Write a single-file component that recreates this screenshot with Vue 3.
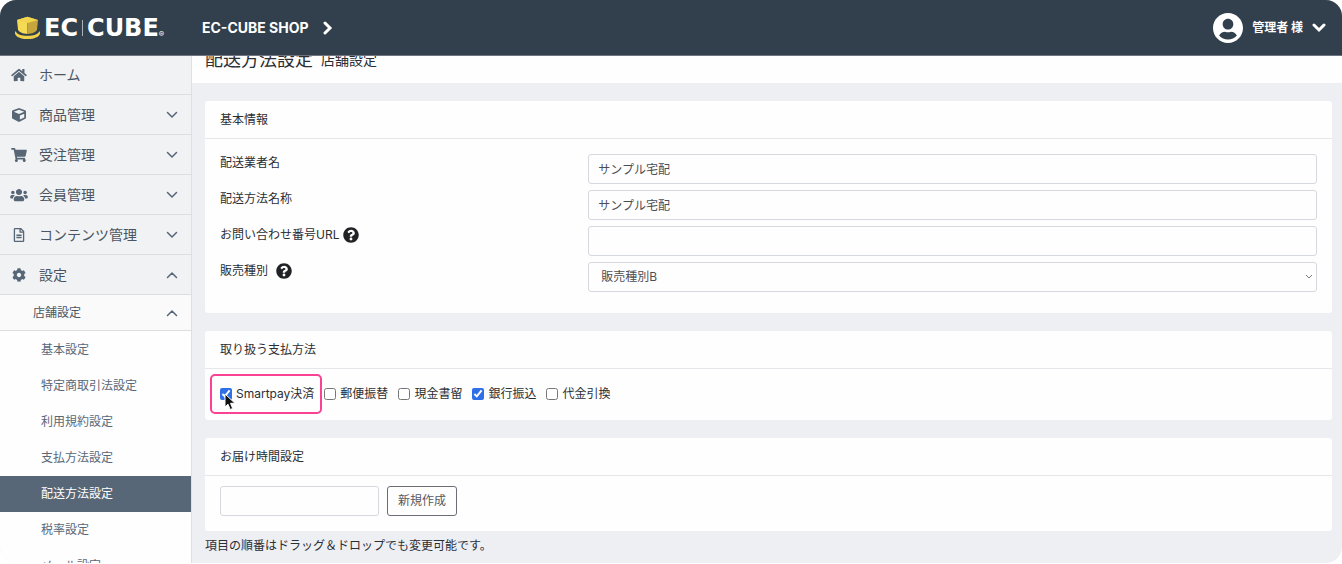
<script setup>
import { ref } from 'vue'

const icons = {
  home: { box: '0 0 576 512', d: 'M280.37 148.26L96 300.11V464a16 16 0 0 0 16 16l112.06-.29a16 16 0 0 0 15.92-16V368a16 16 0 0 1 16-16h64a16 16 0 0 1 16 16v95.64a16 16 0 0 0 16 16.05L464 480a16 16 0 0 0 16-16V300L295.67 148.26a12.19 12.19 0 0 0-15.3 0zM571.6 251.47L488 182.56V44.05a12 12 0 0 0-12-12h-56a12 12 0 0 0-12 12v72.61L318.47 43a48 48 0 0 0-61 0L4.34 251.47a12 12 0 0 0-1.6 16.9l25.5 31A12 12 0 0 0 45.15 301l235.22-193.74a12.19 12.19 0 0 1 15.3 0L530.9 301a12 12 0 0 0 16.9-1.6l25.5-31a12 12 0 0 0-1.7-16.93z' },
  cube: { box: '0 0 512 512', d: 'M239.1 6.3l-208 78c-18.7 7-31.1 25-31.1 45v225.1c0 18.2 10.3 34.8 26.5 42.9l208 104c13.5 6.8 29.4 6.8 42.9 0l208-104c16.3-8.1 26.5-24.8 26.5-42.9V129.3c0-20-12.4-37.9-31.1-44.9l-208-78C262 2.2 250 2.2 239.1 6.3zM256 68.4l192 72v1.1l-192 78-192-78v-1.1l192-72zm32 356V275.5l160-65v133.9l-160 80z' },
  cart: { box: '0 0 576 512', d: 'M528.12 301.319l47.273-208C578.806 78.301 567.391 64 551.99 64H159.208l-9.166-44.81C147.758 8.021 137.93 0 126.529 0H24C10.745 0 0 10.745 0 24v16c0 13.255 10.745 24 24 24h69.883l70.248 343.435C147.325 417.1 136 435.222 136 456c0 30.928 25.072 56 56 56s56-25.072 56-56c0-15.674-6.447-29.835-16.824-40h209.647C430.447 426.165 424 440.326 424 456c0 30.928 25.072 56 56 56s56-25.072 56-56c0-22.172-12.888-41.332-31.579-50.405l5.517-24.276c3.413-15.018-8.002-29.319-23.403-29.319H218.117l-6.545-32h293.145c11.206 0 20.92-7.754 23.403-18.681z' },
  users: { box: '0 0 640 512', d: 'M96 224c35.3 0 64-28.7 64-64s-28.7-64-64-64-64 28.7-64 64 28.7 64 64 64zm448 0c35.3 0 64-28.7 64-64s-28.7-64-64-64-64 28.7-64 64 28.7 64 64 64zm32 32h-64c-17.6 0-33.5 7.1-45.1 18.6 40.3 22.1 68.9 62 75.1 109.4h66c17.7 0 32-14.3 32-32v-32c0-35.3-28.7-64-64-64zm-256 0c61.9 0 112-50.1 112-112S381.9 32 320 32 208 82.1 208 144s50.1 112 112 112zm76.8 32h-8.3c-20.8 10-43.9 16-68.5 16s-47.6-6-68.5-16h-8.3C179.6 288 128 339.6 128 403.2V432c0 26.5 21.5 48 48 48h288c26.5 0 48-21.5 48-48v-28.8c0-63.6-51.6-115.2-115.2-115.2zm-223.7-13.4C161.5 263.1 145.6 256 128 256H64c-35.3 0-64 28.7-64 64v32c0 17.7 14.3 32 32 32h65.9c6.3-47.4 34.9-87.3 75.2-109.4z' },
  file: { box: '0 0 384 512', d: 'M288 248v28c0 6.6-5.4 12-12 12H108c-6.6 0-12-5.4-12-12v-28c0-6.6 5.4-12 12-12h168c6.6 0 12 5.4 12 12zm-12 72H108c-6.6 0-12 5.4-12 12v28c0 6.6 5.4 12 12 12h168c6.6 0 12-5.4 12-12v-28c0-6.6-5.4-12-12-12zm108-188.1V464c0 26.5-21.5 48-48 48H48c-26.5 0-48-21.5-48-48V48C0 21.5 21.5 0 48 0h204.1C264.8 0 277 5.1 286 14.1L369.9 98c9 8.9 14.1 21.2 14.1 33.9zm-128-80V128h76.1L256 51.9zM336 464V176H232c-13.3 0-24-10.7-24-24V48H48v416h288z' },
  cog: { box: '0 0 512 512', d: 'M487.4 315.7l-42.6-24.6c4.3-23.2 4.3-47 0-70.2l42.6-24.6c4.9-2.8 7.1-8.6 5.5-14-11.1-35.6-30-67.8-54.7-94.6-3.8-4.1-10-5.1-14.8-2.3L380.8 110c-17.9-15.4-38.5-27.3-60.8-35.1V25.8c0-5.6-3.9-10.5-9.4-11.7-36.7-8.2-74.3-7.8-109.2 0-5.5 1.2-9.4 6.1-9.4 11.7V75c-22.2 7.9-42.8 19.8-60.8 35.1L88.7 85.5c-4.9-2.8-11-1.9-14.8 2.3-24.7 26.7-43.6 58.9-54.7 94.6-1.7 5.4.6 11.2 5.5 14L67.3 221c-4.3 23.2-4.3 47 0 70.2l-42.6 24.6c-4.9 2.8-7.1 8.6-5.5 14 11.1 35.6 30 67.8 54.7 94.6 3.8 4.1 10 5.1 14.8 2.3l42.6-24.6c17.9 15.4 38.5 27.3 60.8 35.1v49.2c0 5.6 3.9 10.5 9.4 11.7 36.7 8.2 74.3 7.8 109.2 0 5.5-1.2 9.4-6.1 9.4-11.7v-49.2c22.2-7.9 42.8-19.8 60.8-35.1l42.6 24.6c4.9 2.8 11 1.9 14.8-2.3 24.7-26.7 43.6-58.9 54.7-94.6 1.5-5.5-.7-11.3-5.6-14.1zM256 336c-44.1 0-80-35.9-80-80s35.9-80 80-80 80 35.9 80 80-35.9 80-80 80z' },
}
const helpPath = 'M504 256c0 136.997-111.043 248-248 248S8 392.997 8 256C8 119.083 119.043 8 256 8s248 111.083 248 248zM262.655 90c-54.497 0-89.255 22.957-116.549 63.758-3.536 5.286-2.353 12.415 2.715 16.258l34.699 26.31c5.205 3.947 12.621 3.008 16.665-2.122 17.864-22.658 30.113-35.797 57.303-35.797 20.429 0 45.698 13.148 45.698 32.958 0 14.976-12.363 22.667-32.534 33.976C247.128 238.528 216 254.941 216 296v4c0 6.627 5.373 12 12 12h56c6.627 0 12-5.373 12-12v-1.333c0-28.462 83.186-29.647 83.186-106.667 0-58.002-60.165-102-116.531-102zM256 338c-25.365 0-46 20.635-46 46 0 25.364 20.635 46 46 46s46-20.636 46-46c0-25.365-20.635-46-46-46z'

const menu = [
  { label: 'ホーム', icon: icons.home },
  { label: '商品管理', icon: icons.cube, chevron: 'down' },
  { label: '受注管理', icon: icons.cart, chevron: 'down' },
  { label: '会員管理', icon: icons.users, chevron: 'down' },
  { label: 'コンテンツ管理', icon: icons.file, chevron: 'down' },
  { label: '設定', icon: icons.cog, chevron: 'up' },
]
const shopMenu = ['基本設定', '特定商取引法設定', '利用規約設定', '支払方法設定', '配送方法設定', '税率設定', 'メール設定']
const current = '配送方法設定'

const carrier = ref('サンプル宅配')
const methodName = ref('サンプル宅配')
const trackingUrl = ref('')
const saleType = ref('販売種別B')
const newTime = ref('')
const payments = ref([
  { id: 'smartpay', label: 'Smartpay決済', checked: true, marked: true },
  { id: 'yubin', label: '郵便振替', checked: false },
  { id: 'kakitome', label: '現金書留', checked: false },
  { id: 'bank', label: '銀行振込', checked: true },
  { id: 'daibiki', label: '代金引換', checked: false },
])
</script>

<template>
  <div class="app">
    <header class="topbar">
      <a class="logo" href="#" aria-label="EC-CUBE">
        <svg class="hat" viewBox="0 0 27 24" aria-hidden="true">
          <path d="M1.500 15C-.8 19 4.500 23 13.500 23S27.800 19 25.500 15C24 18.300 19.500 19.800 13.500 19.800S3 18.300 1.500 15z" fill="#f0d24c" />
          <path d="M3 4L13.500.8V18C8.500 17.800 4.800 16 4 13.500z" fill="#f4da55" />
          <path d="M13.500.8L24 4 23 13.500C22.200 16 18.500 17.800 13.500 18z" fill="#c5a63c" />
          <path d="M3 4L13.500.8 24 4 13.500 7z" fill="#f1d54f" />
        </svg>
        <span class="wordmark">EC</span><span class="bar"></span><span class="wordmark">CUBE</span><span class="reg">®</span>
      </a>
      <a class="shop" href="#">EC-CUBE SHOP
        <svg viewBox="0 0 10 14" aria-hidden="true"><path d="M2 2l5 5-5 5" /></svg>
      </a>
      <button class="user" type="button">
        <svg class="avatar" viewBox="0 8 496 496" aria-hidden="true">
          <path d="M248 8C111 8 0 119 0 256s111 248 248 248 248-111 248-248S385 8 248 8zm0 96c48.600 0 88 39.400 88 88s-39.400 88-88 88-88-39.400-88-88 39.400-88 88-88zm0 344c-58.700 0-111.300-26.600-146.500-68.200 18.800-35.400 55.600-59.800 98.500-59.800 2.400 0 4.800.4 7.100 1.100 13 4.200 26.600 6.900 40.900 6.900 14.300 0 28-2.700 40.900-6.900 2.300-.7 4.700-1.100 7.100-1.100 42.900 0 79.700 24.400 98.500 59.800C359.300 421.400 306.700 448 248 448z" />
        </svg>
        <span>管理者 様</span>
        <svg class="caret" viewBox="0 0 14 10" aria-hidden="true"><path d="M2 2l5 5 5-5" /></svg>
      </button>
    </header>

    <div class="body">
      <nav class="sidebar" aria-label="メインメニュー">
        <a v-for="m in menu" :key="m.label" class="item" href="#">
          <svg class="icon" :viewBox="m.icon.box" aria-hidden="true"><path :d="m.icon.d" /></svg>
          <span>{{ m.label }}</span>
          <svg v-if="m.chevron" class="chevron" viewBox="0 0 12 8" aria-hidden="true">
            <path :d="m.chevron === 'down' ? 'M1.500 1.500L6 6l4.500-4.500' : 'M1.500 6.500L6 2l4.500 4.500'" />
          </svg>
        </a>
        <a class="group" href="#">
          <span>店舗設定</span>
          <svg class="chevron" viewBox="0 0 12 8" aria-hidden="true"><path d="M1.500 6.500L6 2l4.500 4.500" /></svg>
        </a>
        <div class="sub">
          <a v-for="s in shopMenu" :key="s" href="#" :class="{ active: s === current }">{{ s }}</a>
        </div>
      </nav>

      <main class="main">
        <div class="page-head">
          <h1>配送方法設定</h1>
          <span>店舗設定</span>
        </div>
        <div class="content">
          <section class="card">
            <h2>基本情報</h2>
            <div class="fields">
              <label for="carrier">配送業者名</label>
              <input id="carrier" v-model="carrier" type="text">
              <label for="method">配送方法名称</label>
              <input id="method" v-model="methodName" type="text">
              <label for="url">お問い合わせ番号URL
                <svg class="help" viewBox="0 0 512 512" aria-hidden="true"><path :d="helpPath" /></svg>
              </label>
              <input id="url" v-model="trackingUrl" type="text">
              <label class="spaced" for="type">販売種別
                <svg class="help" viewBox="0 0 512 512" aria-hidden="true"><path :d="helpPath" /></svg>
              </label>
              <div class="select">
                <select id="type" v-model="saleType">
                  <option>販売種別A</option>
                  <option>販売種別B</option>
                </select>
                <svg viewBox="0 0 8 6" aria-hidden="true"><path d="M1 1l3 3 3-3" /></svg>
              </div>
            </div>
          </section>

          <section class="card">
            <h2>取り扱う支払方法</h2>
            <div class="checks">
              <div v-for="p in payments" :key="p.id" class="check" :class="{ marked: p.marked }">
                <input :id="p.id" v-model="p.checked" type="checkbox">
                <label :for="p.id">{{ p.label }}</label>
                <svg v-if="p.marked" class="pointer" viewBox="0 0 12 18" aria-hidden="true">
                  <path d="M1 1v13l3-2.800 2.200 5.300 2.500-1-2.200-5.200H11z" />
                </svg>
              </div>
            </div>
          </section>

          <section class="card">
            <h2>お届け時間設定</h2>
            <form class="times" @submit.prevent>
              <input v-model="newTime" type="text" aria-label="お届け時間">
              <button type="submit">新規作成</button>
            </form>
          </section>
          <p class="note">項目の順番はドラッグ＆ドロップでも変更可能です。</p>
        </div>
      </main>
    </div>
  </div>
</template>

<style>
body {
  margin: 0;
  background: #fff;
}
</style>

<style scoped>
.app,
.app * {
  box-sizing: border-box;
}
.app {
  display: flex;
  flex-direction: column;
  height: calc(100vh - 1px);
  overflow: hidden;
  border-radius: 16px;
  background: #eeeff3;
  color: #2b2e33;
  font-family: Inter, "Noto Sans CJK JP", sans-serif;
  font-size: 12px;
  line-height: 18px;
}
a {
  color: inherit;
  text-decoration: none;
}
input,
select,
button {
  margin: 0;
  font: inherit;
}
.topbar {
  display: flex;
  flex: none;
  align-items: center;
  height: 56px;
  padding: 0 16px 0 14px;
  border-bottom: 1px solid #6d7680;
  background: #323f4c;
  color: #fff;
}
.logo {
  display: flex;
  align-items: center;
  width: 188px;
}
.hat {
  width: 27px;
  height: 24px;
  margin-right: 3px;
}
.wordmark {
  font-family: "DejaVu Sans", sans-serif;
  font-size: 24px;
  font-weight: 700;
  line-height: 28px;
}
.bar {
  width: 1px;
  height: 16px;
  margin: 0 4px;
  background: #aab1b8;
}
.reg {
  align-self: flex-end;
  font-size: 8px;
  line-height: 16px;
}
.shop {
  display: flex;
  align-items: center;
  gap: 14px;
  font-size: 14px;
  font-weight: 700;
}
.shop svg {
  width: 10px;
  height: 14px;
}
.shop path,
.caret path {
  fill: none;
  stroke: #fff;
  stroke-width: 3;
  stroke-linecap: round;
}
.user {
  display: flex;
  align-items: center;
  margin-left: auto;
  padding: 0;
  border: 0;
  background: none;
  color: #fff;
  font-weight: 700;
}
.avatar {
  width: 30px;
  height: 30px;
  margin-right: 9px;
  fill: #fff;
}
.caret {
  width: 14px;
  height: 10px;
  margin-left: 9px;
}
.body {
  display: flex;
  flex: 1;
  min-height: 0;
}
.sidebar {
  flex: none;
  width: 192px;
  overflow: hidden;
  border-right: 1px solid #dddfe3;
  background: #fefefe;
  color: #4a5562;
}
.item {
  display: flex;
  align-items: center;
  height: 40px;
  padding: 0 13px 0 10px;
  border-bottom: 1px solid #dcdee1;
  background: #f1f2f4;
  font-size: 14px;
}
.item:first-child {
  height: 39px;
}
.icon {
  width: 18px;
  height: 14px;
  margin-right: 11px;
  fill: #566676;
}
.chevron {
  width: 12px;
  height: 8px;
  margin-left: auto;
  fill: none;
  stroke: #566676;
  stroke-width: 1.5;
  stroke-linecap: round;
  stroke-linejoin: round;
}
.group {
  display: flex;
  align-items: center;
  height: 36px;
  padding: 0 13px 0 33px;
  border-bottom: 1px solid #dcdee1;
  background: #fafafa;
}
.sub {
  padding-top: 1px;
}
.sub a {
  display: block;
  padding: 9px 0 9px 41px;
  color: #596777;
}
.sub .active {
  background: #586777;
  color: #fff;
}
.main {
  flex: 1;
  min-width: 0;
  overflow: hidden;
}
.page-head {
  display: flex;
  align-items: center;
  gap: 8px;
  height: 27px;
  padding: 0 13px 20px;
  background: #fefefe;
}
h1 {
  margin: 0;
  font-size: 18px;
  font-weight: 400;
}
.page-head span {
  font-size: 14px;
}
.content {
  display: flex;
  flex-direction: column;
  gap: 18px;
  padding: 18px 10px 0 13px;
}
.card {
  border-radius: 3px;
  background: #fefefe;
}
h2 {
  margin: 0;
  padding: 10px 15px 9px;
  border-bottom: 1px solid #e6e7ea;
  font-size: 12px;
  font-weight: 400;
}
.fields {
  display: grid;
  grid-template-columns: 1fr 2fr;
  gap: 6px 4px;
  padding: 15px 15px 21px;
}
.fields label {
  display: flex;
  align-items: center;
  align-self: start;
  gap: 4px;
}
.fields .spaced {
  gap: 8px;
}
.help {
  width: 16px;
  height: 16px;
  fill: #202225;
}
input[type="text"],
select {
  width: 100%;
  height: 30px;
  padding: 0 9px 2px;
  border: 1px solid #d5d9de;
  border-radius: 3px;
  background: #fefefe;
  color: #4b4f55;
}
.select {
  display: grid;
  align-items: center;
}
.select > * {
  grid-area: 1 / 1;
}
select {
  padding: 0 12px;
  appearance: none;
}
.select svg {
  justify-self: end;
  width: 8px;
  height: 6px;
  margin-right: 4px;
  fill: none;
  stroke: #777b80;
  stroke-width: 1;
  pointer-events: none;
}
.checks {
  display: flex;
  flex-wrap: wrap;
  gap: 10px;
  padding: 16px 15px 17px;
}
.check {
  position: relative;
  display: flex;
  align-items: center;
  gap: 4px;
}
.check input {
  width: 12px;
  height: 12px;
  accent-color: #2f70e8;
}
.marked::before {
  position: absolute;
  inset: -11px -8px -11px -10px;
  border: 2px solid #fb4193;
  border-radius: 5px;
  content: "";
  pointer-events: none;
}
.pointer {
  position: absolute;
  top: 8px;
  left: 4px;
  width: 12px;
  height: 18px;
  fill: #111;
  stroke: #fff;
  stroke-width: 1;
}
.times {
  display: flex;
  gap: 8px;
  padding: 10px 15px 15px;
}
.times input[type="text"] {
  width: 159px;
}
.times button {
  width: 70px;
  height: 30px;
  padding: 0;
  border: 1px solid #6b6f75;
  border-radius: 3px;
  background: #fefefe;
  color: #54585e;
}
.note {
  margin: -12px 0 0;
}
</style>
